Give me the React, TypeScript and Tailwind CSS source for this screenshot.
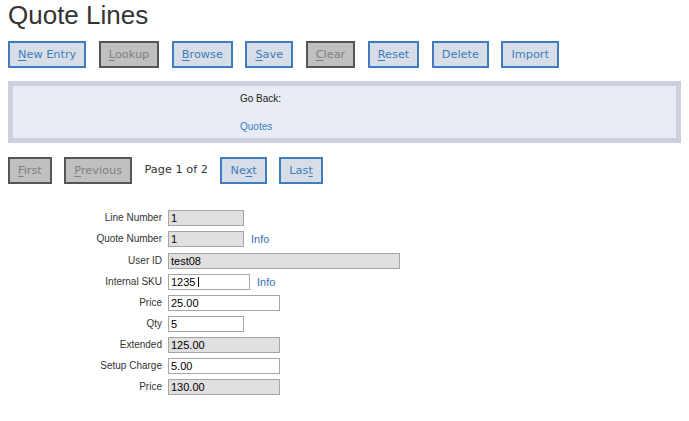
import type { ReactNode } from "react";

type Btn = { label: string; at?: number; disabled?: boolean };

const TOOLBAR: Btn[] = [
  { label: "New Entry", at: 0 },
  { label: "Lookup", at: 0, disabled: true },
  { label: "Browse", at: 0 },
  { label: "Save", at: 0 },
  { label: "Clear", at: 0, disabled: true },
  { label: "Reset", at: 0 },
  { label: "Delete" },
  { label: "Import" },
];

interface Field {
  label: string;
  value: string;
  width: string;
  readOnly?: boolean;
  info?: boolean;
  caret?: boolean;
}

const FIELDS: Field[] = [
  { label: "Line Number", value: "1", width: "w-[76px]", readOnly: true },
  { label: "Quote Number", value: "1", width: "w-[76px]", readOnly: true, info: true },
  { label: "User ID", value: "test08", width: "w-[232px]", readOnly: true },
  { label: "Internal SKU", value: "1235", width: "w-[82px]", info: true, caret: true },
  { label: "Price", value: "25.00", width: "w-[112px]" },
  { label: "Qty", value: "5", width: "w-[76px]" },
  { label: "Extended", value: "125.00", width: "w-[112px]", readOnly: true },
  { label: "Setup Charge", value: "5.00", width: "w-[112px]" },
  { label: "Price", value: "130.00", width: "w-[112px]", readOnly: true },
];

// underline the access key letter
function Label({ text, at }: { text: string; at?: number }) {
  if (at === undefined) return <>{text}</>;
  return (
    <>
      {text.slice(0, at)}
      <span className="underline underline-offset-2">{text[at]}</span>
      {text.slice(at + 1)}
    </>
  );
}

function Button({ label, at, disabled }: Btn): ReactNode {
  const base =
    "h-[27px] px-2 border-2 text-[11.3px] leading-none font-['DejaVu_Sans',sans-serif]";
  const style = disabled
    ? "border-[#555555] bg-[#c0c0c0] text-[#7f7f7f]"
    : "border-[#3d7dc0] bg-[#d8dee7] text-[#3d7dbd]";
  return (
    <button type="button" className={`${base} ${style}`}>
      <Label text={label} at={at} />
    </button>
  );
}

export default function App() {
  return (
    <div className="min-h-[421px] bg-white px-2 font-['Liberation_Sans',Arial,sans-serif]">
      <h1 className="text-[26px] leading-[30px] text-[#333333]">Quote Lines</h1>

      {/* Toolbar */}
      <div className="flex gap-[12.5px] mt-[11px]">
        {TOOLBAR.map((b) => (
          <Button key={b.label} label={b.label} at={b.at} disabled={b.disabled} />
        ))}
      </div>

      {/* Go back panel */}
      <div className="mt-[13px] h-[62px] border-[5px] border-[#cdd1de] bg-[#e8ecf4] pl-[227px] pt-[7px] text-[10px]">
        <div className="text-[#222222] leading-[12px]">Go Back:</div>
        <div className="mt-[16px] leading-[12px] text-[#3c7cc6]">Quotes</div>
      </div>

      {/* Pagination */}
      <div className="flex items-center gap-[12.5px] mt-[14px]">
        <Button label="First" at={0} disabled />
        <Button label="Previous" at={0} disabled />
        <span className="text-[11.3px] text-[#333333] font-['DejaVu_Sans',sans-serif]">
          Page 1 of 2
        </span>
        <Button label="Next" at={2} />
        <Button label="Last" at={3} />
      </div>

      {/* Form */}
      <div className="grid grid-cols-[154px_auto] gap-x-[6px] gap-y-[5px] mt-[26px] items-center text-[10px]">
        {FIELDS.map((f, i) => (
          <div key={i} className="contents">
            <div className="text-right text-[#333333] leading-[16px]">{f.label}</div>
            <div className="flex items-center gap-[7px]">
              <div className="relative">
                <input
                  readOnly
                  value={f.value}
                  className={`${f.width} h-[16px] border border-[#a6a6a6] px-[2px] text-[11px] leading-[14px] text-black outline-none font-['Liberation_Sans',Arial,sans-serif] ${
                    f.readOnly ? "bg-[#e0e0e0]" : "bg-white"
                  }`}
                />
                {f.caret && (
                  <span className="absolute left-[30px] top-[3px] h-[10px] w-px bg-black" />
                )}
              </div>
              {f.info && <span className="text-[11px] text-[#3a70b2]">Info</span>}
            </div>
          </div>
        ))}
      </div>
    </div>
  );
}
